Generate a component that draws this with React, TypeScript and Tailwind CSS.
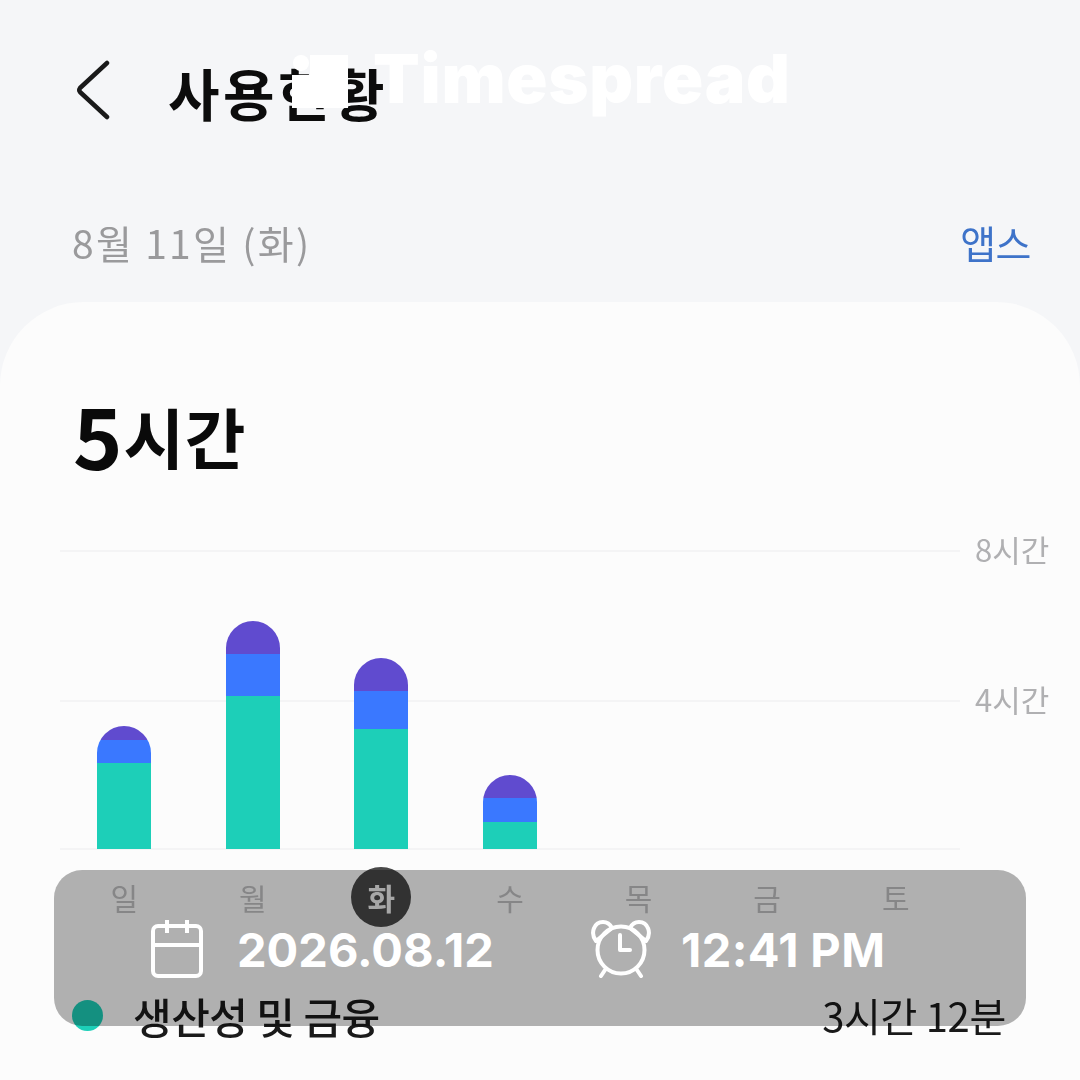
const kr = "font-['Noto_Sans_CJK_KR',sans-serif]";

const bars = [
  { p: 14, b: 23, g: 86 },
  { p: 33, b: 42, g: 153 },
  { p: 33, b: 38, g: 120 },
  { p: 23, b: 24, g: 27 },
  null,
  null,
  null,
];
const days = ["일", "월", "화", "수", "목", "금", "토"];

export default function App() {
  return (
    <div className={`relative h-[1080px] w-[1080px] overflow-hidden bg-[#f5f6f8] ${kr}`}>
      <div className="h-[1080px] blur-[0.6px]">
        <header className="flex h-[180px] items-start pl-[76px] pt-[56px]">
          <svg width="36" height="64" viewBox="0 0 36 64" fill="none" className="mt-[1px]">
            <path d="M31 6 L4 31 Q2.500 33 4 35 L31 60" stroke="#1a1a1a" strokeWidth="4.500" strokeLinecap="round" strokeLinejoin="round" />
          </svg>
          <h1 className="ml-[56px] text-[56px] font-bold leading-[72px] tracking-[3.500px] text-[#0c0c0c]">사용현황</h1>
        </header>

        <div className="flex h-[122px] items-start justify-between pl-[72px] pr-[49px] pt-[30px]">
          <span className="text-[39px] leading-[64px] tracking-[2.300px] text-[#9a9a9c]">8월 11일 (화)</span>
          <span className="text-[39px] leading-[64px] tracking-[-0.5px] text-[#3e73c9]">앱스</span>
        </div>

        <main className="h-[778px] rounded-t-[84px] bg-[#fcfcfc] pl-[60px] pr-[30px] pt-[82px]">
          <div className="flex h-[100px] items-end pl-[13px]">
            <span className="text-[84px] font-bold leading-[100px] text-[#0a0a0a]">5</span>
            <span className="mb-[7px] ml-[1px] text-[66px] font-bold leading-[84px] tracking-[0.5px] text-[#0a0a0a]">시간</span>
          </div>

          <div className="relative mt-[66px] h-[300px] w-full">
            <div className="flex h-[150px] items-start">
              <div className="h-[2px] w-[900px] bg-[#f4f4f5]" />
              <span className="ml-[15px] mt-[-26px] text-[31px] leading-[50px] tracking-[0px] text-[#b0b0b2]">8시간</span>
            </div>
            <div className="flex h-[148px] items-start">
              <div className="h-[2px] w-[900px] bg-[#f4f4f5]" />
              <span className="ml-[15px] mt-[-26px] text-[31px] leading-[50px] tracking-[0px] text-[#b0b0b2]">4시간</span>
            </div>
            <div className="h-[2px] w-[900px] bg-[#f4f4f5]" />

            <div className="absolute left-0 top-0 grid h-[299px] w-[900px] grid-cols-7">
              {bars.map((bar, i) => (
                <div key={i} className="flex flex-col items-center justify-end">
                  {bar && (
                    <div className="flex w-[54px] flex-col overflow-hidden rounded-t-[27px]">
                      <div className="bg-[#604bcf]" style={{ height: bar.p }} />
                      <div className="bg-[#3a78ff]" style={{ height: bar.b }} />
                      <div className="bg-[#1dcfb8]" style={{ height: bar.g }} />
                    </div>
                  )}
                </div>
              ))}
            </div>
          </div>

          <div className="grid h-[133px] w-[900px] grid-cols-7 pt-[17px]">
            {days.map((d) => (
              <div key={d} className="flex justify-center">
                {d === "화" ? (
                  <span className="flex h-[60px] w-[60px] items-center justify-center rounded-full bg-[#484848] text-[30px] font-bold text-[#f0f0f0]">{d}</span>
                ) : (
                  <span className="flex h-[60px] items-center text-[30px] text-[#c0c0c2]">{d}</span>
                )}
              </div>
            ))}
          </div>

          <div className="flex h-[64px] items-center pl-[12px] pr-[44px]">
            <span className="h-[31px] w-[31px] rounded-full bg-[#1dcfb8]" />
            <span className="ml-[30px] text-[42px] font-medium tracking-[-0.5px] text-[#1a1a1a]">생산성 및 금융</span>
            <span className="ml-auto text-[40px] tracking-[-0.3px] text-[#1a1a1a]">3시간 12분</span>
          </div>
        </main>
      </div>

      <div className="absolute left-[373px] top-[38px] font-['Inter',sans-serif] text-[68px] font-black leading-[80px] tracking-[0.8px] text-white">Timespread</div>
      <div className="absolute left-[292px] top-[55px] flex items-end">
        <div className="flex flex-col items-center">
          <div className="mb-[4px] h-[16px] w-[16px] rounded-full bg-white" />
          <div className="h-[33px] w-[18px] bg-white" />
        </div>
        <div className="h-[53px] w-[38px] bg-white" />
      </div>

      <div className="absolute left-[54px] top-[870px] flex h-[156px] w-[972px] items-center rounded-[28px] bg-[rgba(0,0,0,0.3)] font-['Inter',sans-serif] text-[47px] font-bold text-white">
        <svg width="56" height="60" viewBox="0 0 56 60" fill="none" stroke="white" strokeWidth="4" className="ml-[96px] mt-[2px]">
          <rect x="3" y="7" width="48" height="50" rx="5" />
          <path d="M3 26 H51 M17 1 V14 M37 1 V14" />
        </svg>
        <span className="ml-[31px] mt-[4px] w-[354px]">2026.08.12</span>
        <svg width="60" height="58" viewBox="0 0 60 58" fill="none" stroke="white" strokeWidth="4" strokeLinecap="round" strokeLinejoin="round" className="mt-[2px]">
          <circle cx="30" cy="30" r="23.500" />
          <path d="M29 15 V30 H39 M14 50 L10 56 M46 50 L50 56" />
          <path d="M5 21 C-1 13 3 2 12 2 C16 2 19 4 21 8 Z M55 21 C61 13 57 2 48 2 C44 2 41 4 39 8 Z" />
        </svg>
        <span className="ml-[30px] mt-[4px] tracking-[0.4px]">12:41 PM</span>
      </div>
    </div>
  );
}
